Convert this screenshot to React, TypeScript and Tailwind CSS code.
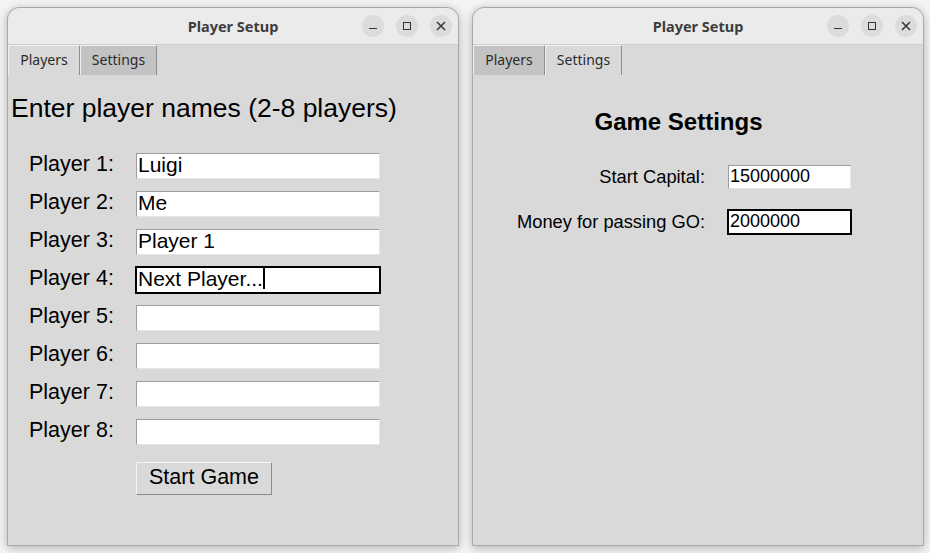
import React from 'react'

const sans = "font-['Liberation_Sans',Arial,sans-serif]"
const ui = "font-['Noto_Sans','Open_Sans',sans-serif]"

function TitleBar() {
  return (
    <div className="relative flex h-[37px] items-center justify-center rounded-t-[12px] border-b border-[#cdcdcd] bg-[#ebebeb]">
      <span className={`${ui} pt-[2px] text-[14.5px] font-bold text-[#3d3d3d]`}>Player Setup</span>
      <div className="absolute right-[6px] top-[7px] flex gap-[12px]">
        <div className="flex h-[22px] w-[22px] items-center justify-center rounded-full bg-[#dcdcdc]">
          <div className="mt-[5px] h-[1.5px] w-[8px] bg-[#333]" />
        </div>
        <div className="flex h-[22px] w-[22px] items-center justify-center rounded-full bg-[#dcdcdc]">
          <div className="h-[8px] w-[8px] border-[1.5px] border-[#333]" />
        </div>
        <div className="flex h-[22px] w-[22px] items-center justify-center rounded-full bg-[#dcdcdc]">
          <svg width="10" height="10" viewBox="0 0 10 10">
            <path d="M1 1L9 9M9 1L1 9" stroke="#333" strokeWidth="1.5" />
          </svg>
        </div>
      </div>
    </div>
  )
}

function Tabs({ active }: { active: 'players' | 'settings' }) {
  const tab = (label: string, on: boolean, w: string) => (
    <div
      className={`${ui} flex h-[30px] ${w} items-center justify-center rounded-t-[2px] border-l border-t border-r border-l-[#f2f2f2] border-t-[#f2f2f2] border-r-[#8e8e8e] pb-[2px] text-[14px] text-[#2b2b2b] ${
        on ? 'bg-[#d9d9d9]' : 'bg-[#c3c3c3]'
      }`}
    >
      {label}
    </div>
  )
  return (
    <div className="flex">
      {tab('Players', active === 'players', 'w-[72px]')}
      {tab('Settings', active === 'settings', 'w-[77px]')}
    </div>
  )
}

function Field({
  value,
  focused,
  w,
  h,
  size,
  caret,
  lift,
}: {
  value: string
  focused?: boolean
  w: string
  h: string
  size: string
  caret?: boolean
  lift: string
}) {
  return (
    <div className={`${w} ${h} border ${focused ? 'border-black' : 'border-transparent'}`}>
      <div
        className={`flex h-full w-full items-center border ${
          focused
            ? 'border-black'
            : 'border-t-[#9c9c9c] border-l-[#9c9c9c] border-b-[#e6e6e6] border-r-[#e6e6e6]'
        } bg-white pl-[1px] ${lift} ${sans} ${size} text-black`}
      >
        <span className="whitespace-pre">{value}</span>
        {caret && <span className="inline-block h-[21px] w-[2px] bg-black" />}
      </div>
    </div>
  )
}

function Window({ children, active }: { children: React.ReactNode; active: 'players' | 'settings' }) {
  return (
    <div className="flex h-[539px] w-[452px] flex-col rounded-t-[12px] border border-[#a9a9a9] bg-[#d9d9d9] shadow-[0_2px_10px_rgba(0,0,0,0.28)]">
      <TitleBar />
      <Tabs active={active} />
      {children}
    </div>
  )
}

const players = ['Luigi', 'Me', 'Player 1', 'Next Player...', '', '', '', '']

export default function App() {
  return (
    <div className="flex h-[553px] w-[930px] gap-[13px] bg-[#f4f4f4] pl-[7px] pt-[7px]">
      <Window active="players">
        <div className="flex flex-col">
          <div className={`${sans} pl-[3px] pt-[18px] text-[26.5px] leading-[30px] text-black`}>
            Enter player names (2-8 players)
          </div>
          <div className="mt-[29px] flex flex-col gap-[10px] pl-[21px]">
            {players.map((p, i) => (
              <div key={i} className="flex items-start">
                <div className={`${sans} w-[106px] text-[21.5px] leading-[24px] text-black`}>
                  Player {i + 1}:
                </div>
                <Field
                  value={p}
                  focused={i === 3}
                  caret={i === 3}
                  w="w-[246px]"
                  h="h-[28px]"
                  size="text-[21px]"
                  lift="pb-[3px]"
                />
              </div>
            ))}
          </div>
          <div className="ml-[128px] mt-[16px]">
            <div
              className={`${sans} flex h-[33px] w-[136px] items-center justify-center border border-t-[#f4f4f4] border-l-[#f4f4f4] border-b-[#8a8a8a] border-r-[#8a8a8a] bg-[#d9d9d9] pb-[3px] text-[21.5px] text-black`}
            >
              Start Game
            </div>
          </div>
        </div>
      </Window>

      <Window active="settings">
        <div className="flex flex-col">
          <div className={`${sans} w-[411px] pt-[33px] text-center text-[24px] font-bold leading-[28px] text-black`}>
            Game Settings
          </div>
          <div className="mt-[28px] flex flex-col gap-[19px] pl-[44px]">
            <div className="flex items-center gap-[22px]">
              <div className={`${sans} w-[188px] pb-[1px] text-right text-[18.3px] leading-[22px] text-black`}>
                Start Capital:
              </div>
              <Field value="15000000" w="w-[125px]" h="h-[26px]" size="text-[18px]" lift="pb-[2px]" />
            </div>
            <div className="flex items-center gap-[22px]">
              <div className={`${sans} w-[188px] pb-[1px] text-right text-[18.3px] leading-[22px] text-black`}>
                Money for passing GO:
              </div>
              <Field value="2000000" focused w="w-[125px]" h="h-[26px]" size="text-[18px]" lift="pb-[2px]" />
            </div>
          </div>
        </div>
      </Window>
    </div>
  )
}
